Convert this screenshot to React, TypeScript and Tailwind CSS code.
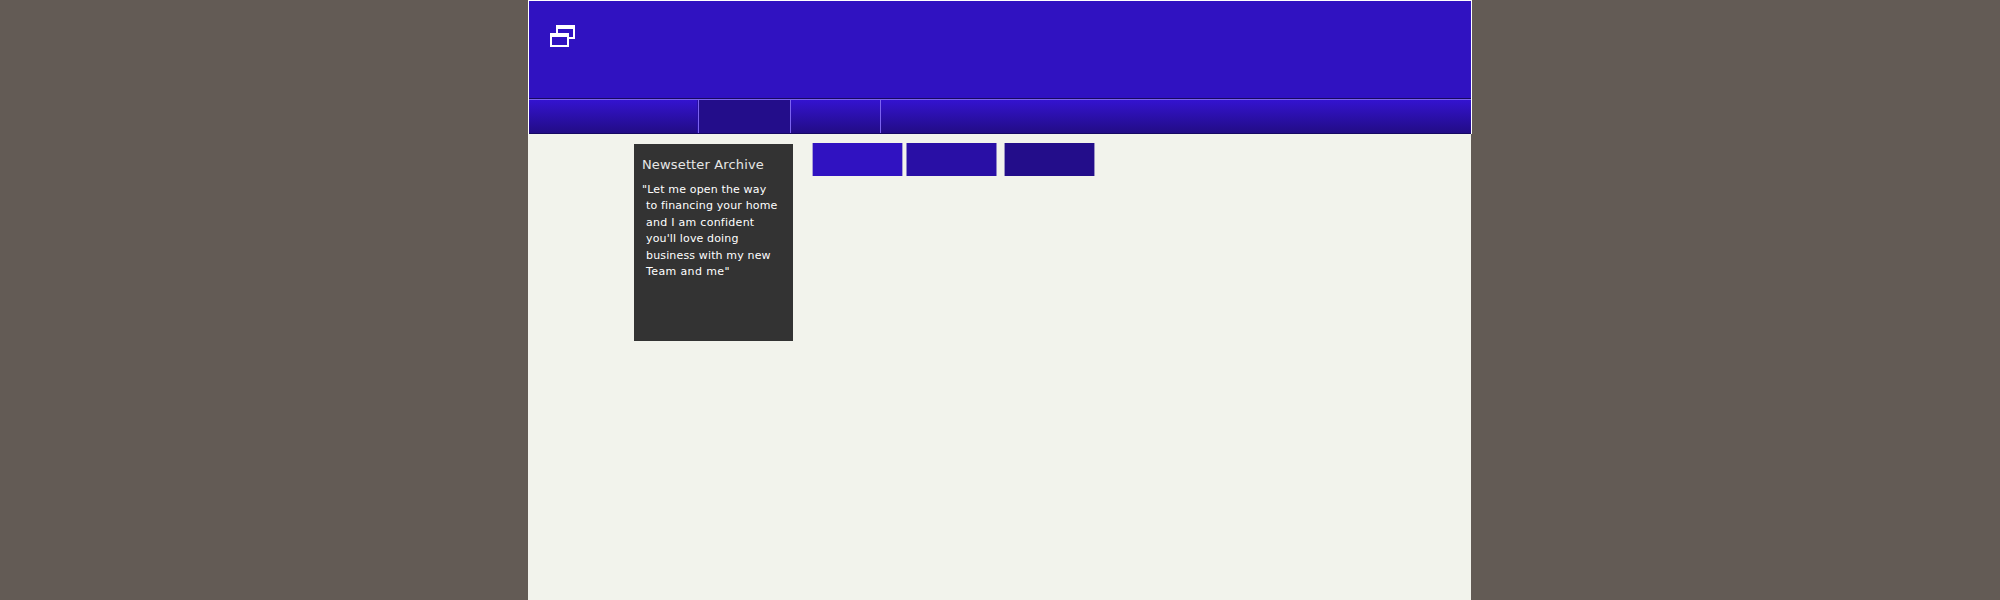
const quote = [
  { text: '"Let me open the way', cls: "ml-0 tracking-[0.15px]" },
  { text: "to financing your home", cls: "ml-1 tracking-[0.15px]" },
  { text: "and I am confident", cls: "ml-1 tracking-[0.27px]" },
  { text: "you'll love doing", cls: "ml-1 tracking-[0.14px]" },
  { text: "business with my new", cls: "ml-1 tracking-[0.15px]" },
  { text: 'Team and me"', cls: "ml-1 tracking-[0.38px]" },
];

function WindowsIcon() {
  return (
    <svg className="ml-[21px] mt-6 block" width="25" height="22" viewBox="0 0 25 22" shapeRendering="crispEdges">
      <path
        fill="#ffffff"
        fillRule="evenodd"
        d="M6 0H25V14H19V12H23V4H8V8H6ZM0 8H19V22H0ZM2 12V20H17V12Z"
      />
    </svg>
  );
}

export default function App() {
  return (
    <div className="flex h-[600px] w-[2000px] justify-center overflow-hidden bg-[#635b55] font-['DejaVu_Sans',sans-serif]">
      <div className="flex h-full w-[944px] flex-col">
        <header className="h-[134px] border-x border-t border-white bg-[#3012c1]">
          <div className="h-[97px]">
            <div className="flex">
              <WindowsIcon />
            </div>
          </div>
          <nav className="flex h-9 border-t border-[#180a60]">
            <div className="flex h-full w-full border-b border-t border-b-[#160863] border-t-[#7c63f0] bg-linear-to-b from-[#3413d0] to-[#220c86]">
              <a className="w-[169px] border-r border-[#280fa5]" />
              <a className="w-[92px] border-l border-[#7c63f0] bg-[#230d8a]" />
              <a className="w-[90px] border-l border-[#7c63f0]" />
              <a className="flex-1 border-l border-[#7c63f0]" />
            </div>
          </nav>
        </header>
        <main className="mr-px flex flex-1 items-start bg-[#f2f3ec]">
          <aside className="ml-[106px] mt-[10px] h-[197px] w-[159px] bg-[#333333] pl-2 pt-3 text-white">
            <h2 className="whitespace-nowrap text-[13px] leading-[17px] tracking-[0.15px] text-[#e6e6e6]">
              Newsetter Archive
            </h2>
            <div className="mt-[9px] text-[11px] leading-[16.4px]">
              {quote.map((line) => (
                <p key={line.text} className={`whitespace-nowrap ${line.cls}`}>
                  {line.text}
                </p>
              ))}
            </div>
          </aside>
          <div className="ml-[19px] mt-[9px] flex">
            <div className="h-[33px] w-[91px] border-x border-[#a9a0d8] bg-[#3012c1]" />
            <div className="ml-[3px] h-[33px] w-[91px] border-x border-[#8f83cb] bg-[#290fa5]" />
            <div className="ml-[7px] h-[33px] w-[91px] border-x border-[#9a92c4] bg-[#230d8a]" />
          </div>
        </main>
      </div>
    </div>
  );
}
